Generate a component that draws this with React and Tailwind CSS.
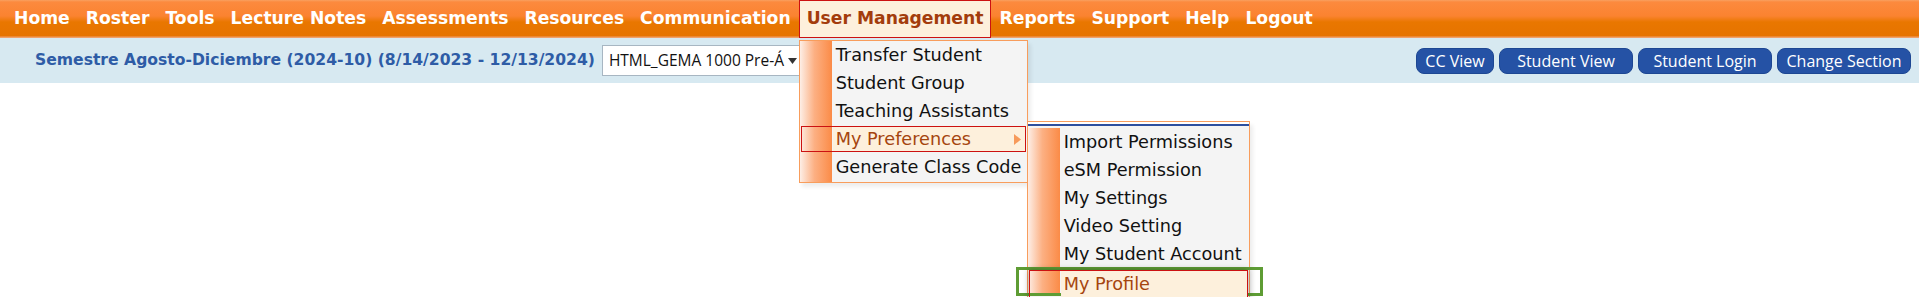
import React from "react";

const navItems = ["Home","Roster","Tools","Lecture Notes","Assessments","Resources","Communication","User Management","Reports","Support","Help","Logout"];
const menu1 = ["Transfer Student","Student Group","Teaching Assistants","My Preferences","Generate Class Code"];
const menu2 = ["Import Permissions","eSM Permission","My Settings","Video Setting","My Student Account","My Profile"];

const stripe = "bg-[linear-gradient(to_right,#fdeee6,#fcb083_45%,#fb8b47)]";

function Row({ label, active, arrow }) {
  return (
    <div className="h-[28px] p-[1px]">
      <div className={"h-full flex items-center border " + (active ? "border-[#cc1111] bg-[linear-gradient(to_right,transparent_31px,#fdf0dc_31px)] text-[#a5450f]" : "border-transparent text-[#111]")}>
        <span className="pl-[34px] flex-1 whitespace-nowrap">{label}</span>
        {arrow && (
          <svg width="7" height="11" viewBox="0 0 7 11" className="mr-[4px]"><path d="M0 0 L7 5.5 L0 11 Z" fill="#f79a5a" /></svg>
        )}
      </div>
    </div>
  );
}

export default function App() {
  return (
    <div className="relative w-[1919px] h-[297px] bg-white overflow-hidden font-['DejaVu_Sans',sans-serif]">
      <nav className="h-[38px] flex items-stretch pl-[6px] bg-[linear-gradient(to_bottom,#f9a060_0px,#fc8a3e_2px,#fb8330_16px,#e97700_22px,#e67300_36px,#f1a06a_37px)]">
        {navItems.map((n) => {
          const active = n === "User Management";
          return (
            <div key={n} className={"relative flex items-center px-[7px] text-[17.2px] font-bold whitespace-nowrap " + (active ? "bg-[#fdf0dc] text-[#a33c0c] border border-[#cc1111]" : "text-white border border-transparent")}>
              {n}
              {active && (
                <div className="absolute left-[-1px] top-[39px] w-[229px] z-10 border border-[#f89d5c] bg-[#f4f4f4] shadow-[3px_4px_4px_rgba(0,0,0,0.07)] font-normal text-[17.7px]">
                  <div className={"absolute left-0 top-0 bottom-0 w-[32px] " + stripe}></div>
                  <div className="relative">
                    {menu1.map((m) => (
                      <div key={m} className="relative">
                        <Row label={m} active={m === "My Preferences"} arrow={m === "My Preferences"} />
                        {m === "My Preferences" && (
                          <div className="absolute left-[227px] top-[-4px] w-[223px] h-[200px] border border-[#f89d5c] bg-[#f4f4f4] shadow-[3px_4px_4px_rgba(0,0,0,0.07)]">
                            <div className="h-[2px] bg-white"></div>
                            <div className="h-[2px] bg-[#2d4f9e]"></div>
                            <div className="h-[2px]"></div>
                            <div className="relative">
                              <div className={"absolute left-0 top-0 bottom-0 w-[32px] " + stripe}></div>
                              <div className="relative">
                                {menu2.map((s) => (
                                  s === "My Profile" ? (
                                    <div key={s} className="relative h-[28px]">
                                      <div className="absolute left-[-12px] top-[-1px] w-[247px] h-[29px] border-[3px] border-[#5e9c34]"></div>
                                      <div className="absolute left-[1px] top-[2px] right-[1px] h-[28px] border border-[#cc1111] shadow-[0_0_6px_rgba(0,0,0,0.35)] bg-[linear-gradient(to_right,transparent_31px,#fdf0dc_31px)] text-[#a5450f] flex items-center">
                                        <span className="pl-[34px] whitespace-nowrap">{s}</span>
                                      </div>
                                    </div>
                                  ) : (
                                    <Row key={s} label={s} />
                                  )
                                ))}
                              </div>
                            </div>
                          </div>
                        )}
                      </div>
                    ))}
                    <div className="h-[1px]"></div>
                  </div>
                </div>
              )}
            </div>
          );
        })}
      </nav>
      <div className="h-[45px] bg-[#d7e9f1] flex items-center">
        <div className="pl-[35px] text-[15.6px] font-bold text-[#2e5ca6] whitespace-nowrap">
          Semestre Agosto-Diciembre (2024-10) (8/14/2023 - 12/13/2024)
        </div>
        <div className="ml-[7px] w-[201px] h-[31px] bg-white border border-[#a7b6c2] flex items-center pl-[6px] font-['Open_Sans',sans-serif] text-[15.5px] text-[#111]">
          <span className="whitespace-nowrap">HTML_GEMA 1000 Pre-Á</span>
          <svg width="9" height="6" viewBox="0 0 9 6" className="ml-[4px]"><path d="M0 0 L9 0 L4.5 6 Z" fill="#333" /></svg>
        </div>
        <div className="flex-1"></div>
        <div className="flex gap-[5px] pr-[8px] font-['Open_Sans',sans-serif] text-[16px] text-white">
          {[["CC View","w-[78px]"],["Student View","w-[134px]"],["Student Login","w-[134px]"],["Change Section","w-[134px]"]].map(([t,w]) => (
            <div key={t} className={w + " h-[26px] rounded-[8px] bg-[#2552a5] border border-[#1d4793] flex items-center justify-center whitespace-nowrap"}>{t}</div>
          ))}
        </div>
      </div>
    </div>
  );
}
